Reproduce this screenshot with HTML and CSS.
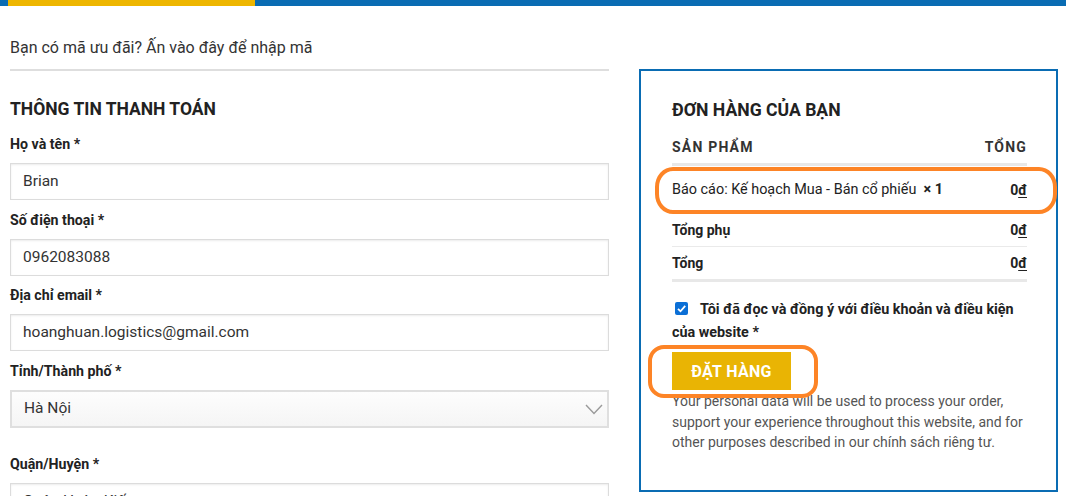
FILE: index.html
```html
<!DOCTYPE html>
<html lang="vi">
<head>
<meta charset="utf-8">
<title>Thanh toán</title>
<link rel="stylesheet" href="styles.css">
</head>
<body>
<div class="topbar"></div>
<main class="checkout">
  <section class="billing">
    <p class="coupon">Bạn có mã ưu đãi? Ấn vào đây để nhập mã</p>
    <h3 class="section-title">THÔNG TIN THANH TOÁN</h3>
    <div class="field">
      <label class="label">Họ và tên *</label>
      <div class="input">Brian</div>
    </div>
    <div class="field">
      <label class="label">Số điện thoại *</label>
      <div class="input">0962083088</div>
    </div>
    <div class="field">
      <label class="label">Địa chỉ email *</label>
      <div class="input">hoanghuan.logistics@gmail.com</div>
    </div>
    <div class="field field-select">
      <label class="label">Tỉnh/Thành phố *</label>
      <div class="input select">
        <span>Hà Nội</span>
        <svg class="chevron" width="18" height="11" viewBox="0 0 18 11"><polyline points="1,1 9,9.5 17,1" fill="none" stroke="#9a9a9a" stroke-width="1.4"/></svg>
      </div>
    </div>
    <div class="field">
      <label class="label">Quận/Huyện *</label>
      <div class="input">Quận Hoàn Kiếm</div>
    </div>
  </section>

  <section class="order">
    <h3 class="order-title">ĐƠN HÀNG CỦA BẠN</h3>
    <div class="row head">
      <span>SẢN PHẨM</span>
      <span>TỔNG</span>
    </div>
    <div class="row item">
      <span>Báo cáo: Kế hoạch Mua - Bán cổ phiếu&nbsp; <strong>×&nbsp;1</strong></span>
      <strong>0<u>đ</u></strong>
    </div>
    <div class="row sub">
      <strong>Tổng phụ</strong>
      <strong>0<u>đ</u></strong>
    </div>
    <div class="row total">
      <strong>Tổng</strong>
      <strong>0<u>đ</u></strong>
    </div>
    <p class="terms"><span class="check"><svg width="13" height="13" viewBox="0 0 13 13"><rect x="0" y="0" width="13" height="13" rx="2" fill="#0b6fd6"/><polyline points="3,6.8 5.5,9.3 10.2,3.8" fill="none" stroke="#fff" stroke-width="1.8"/></svg></span>Tôi đã đọc và đồng ý với điều khoản và điều kiện của website *</p>
    <button class="place-order">ĐẶT HÀNG</button>
    <p class="privacy">Your personal data will be used to process your order, support your experience throughout this website, and for other purposes described in our chính sách riêng tư.</p>

    <div class="mark mark-row"></div>
    <div class="mark mark-btn"></div>
  </section>
</main>
</body>
</html>
```

FILE: styles.css
```css
* { box-sizing: border-box; }

html, body {
  margin: 0;
  padding: 0;
  background: #fff;
  overflow: hidden;
}

body {
  width: 1066px;
  height: 496px;
  font-family: Roboto, "Noto Sans", "Liberation Sans", sans-serif;
  color: #333;
}

.topbar {
  height: 6px;
  background: linear-gradient(to right, #0a6cb3 0, #0a6cb3 8px, #eeb600 8px, #eeb600 255px, #0a6cb3 255px);
}

.checkout {
  display: flex;
  gap: 30px;
  padding-left: 10px;
  align-items: flex-start;
}

/* Left column */
.billing {
  width: 599px;
  flex: none;
}

.coupon {
  margin: 31px 0 0;
  font-size: 16px;
  line-height: 22px;
  color: #333;
  padding-bottom: 10px;
  border-bottom: 2px solid #dedede;
}

.section-title {
  margin: 26px 0 13px;
  font-size: 17.5px;
  line-height: 24px;
  font-weight: 700;
  color: #222;
}

.field {
  margin-bottom: 9.6px;
}

.field-select {
  margin-bottom: 26px;
}

.label {
  display: block;
  font-size: 14.2px;
  line-height: 20px;
  font-weight: 700;
  color: #222;
  margin-bottom: 9px;
}

.input {
  height: 37px;
  border: 1px solid #dcdcdc;
  box-shadow: inset 0 1px 2px rgba(0,0,0,0.08);
  padding: 0 12px;
  font-size: 15.5px;
  line-height: 35px;
  color: #333;
  background: #fff;
}

.select {
  height: 38px;
  display: flex;
  align-items: center;
  justify-content: space-between;
  background: linear-gradient(#fdfdfd, #f5f5f5);
  border: 2px solid #dfdfdf;
  box-shadow: none;
  padding: 0 4px 0 12px;
}

.chevron {
  display: block;
  margin-top: 2px;
}

/* Right column */
.order {
  position: relative;
  width: 419px;
  flex: none;
  margin-top: 63px;
  border: 2px solid #0a6cb3;
  padding: 27px 29px 33px 31px;
  height: 423px;
}

.order-title {
  margin: 0 0 15px;
  font-size: 17.6px;
  line-height: 24px;
  font-weight: 700;
  color: #222;
}

.row {
  display: flex;
  justify-content: space-between;
  align-items: center;
  font-size: 14px;
  line-height: 20px;
  color: #222;
}

.row strong { font-weight: 700; }

.row u { text-decoration: underline; text-underline-offset: 2px; }

.head {
  font-weight: 700;
  letter-spacing: 1.2px;
  color: #333;
  padding-bottom: 6px;
  border-bottom: 3px solid #e8e8e8;
}

.item {
  font-size: 14.4px;
  padding: 14px 0 13px;
  border-bottom: 1px solid #eaeaea;
}

.item > strong { font-size: 14px; }

.item > span { color: #222; }

.sub {
  padding: 6px 0 6px;
  border-bottom: 1px solid #eaeaea;
}

.total {
  padding: 6px 0 6px;
  border-bottom: 3px solid #e8e8e8;
}

.terms {
  margin: 16px 0 0;
  font-size: 14.35px;
  line-height: 23px;
  font-weight: 700;
  color: #222;
}

.check {
  display: inline-block;
  margin: 0 12px 0 3px;
  vertical-align: -1px;
}

.check svg { display: block; }

.place-order {
  display: block;
  margin-top: 8px;
  width: 119px;
  height: 38px;
  border: 0;
  background: #e9b404;
  color: #fff;
  font-family: Roboto, "Noto Sans", "Liberation Sans", sans-serif;
  font-size: 16px;
  font-weight: 700;
  letter-spacing: 0.3px;
  padding: 0;
  cursor: pointer;
}

.privacy {
  margin: 1px 0 0;
  font-size: 14px;
  line-height: 20.5px;
  color: #555;
}

/* Hand-drawn annotation marks */
.mark {
  position: absolute;
  border: 4px solid #fd8426;
  pointer-events: none;
}

.mark-row {
  left: 14px;
  top: 96px;
  width: 402px;
  height: 47px;
  border-radius: 18px / 20px;
}

.mark-btn {
  left: 7px;
  top: 274px;
  width: 170px;
  height: 53px;
  border-radius: 16px;
}
```
